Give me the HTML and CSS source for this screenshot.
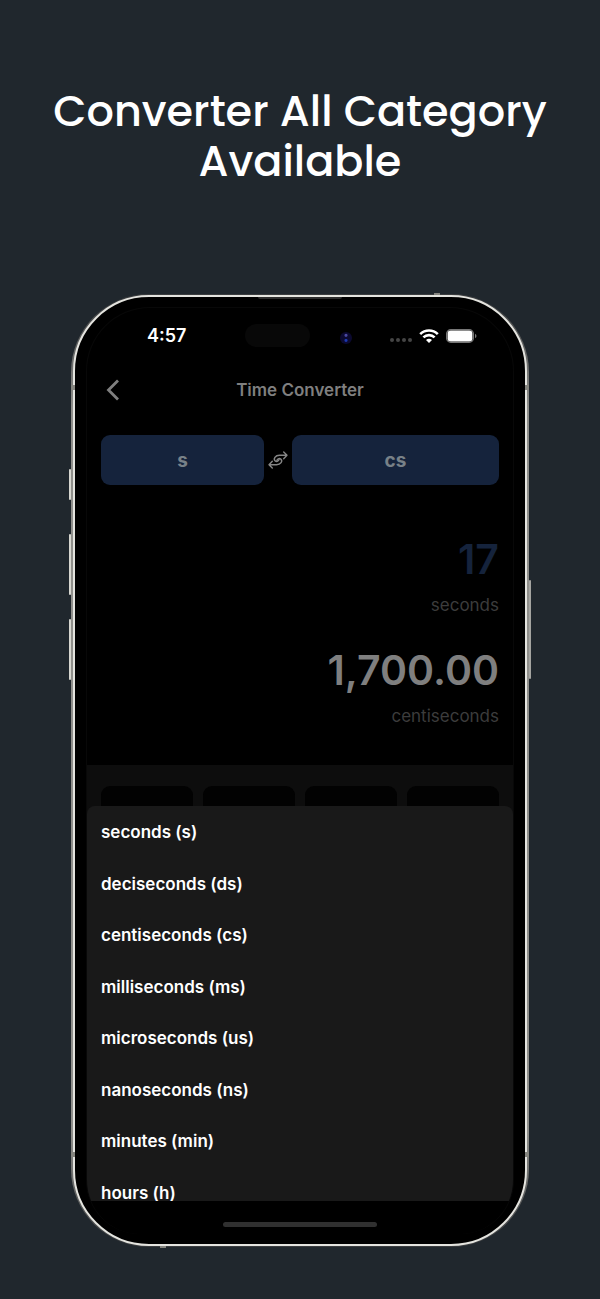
FILE: index.html
```html
<!DOCTYPE html>
<html lang="en">

<head>
    <meta charset="UTF-8">
    <meta name="viewport" content="width=device-width, initial-scale=1.0">
    <title>Time Converter</title>
    <link rel="stylesheet" href="styles.css">
</head>

<body>
    <h1>Converter All Category Available</h1>
    <div class="phone">
        <span class="side-button action"></span>
        <span class="side-button volume-up"></span>
        <span class="side-button volume-down"></span>
        <span class="side-button power"></span>
        <span class="antenna antenna-top"></span>
        <span class="antenna antenna-bottom"></span>
        <span class="antenna antenna-left"></span>
        <span class="antenna antenna-right"></span>
        <span class="antenna antenna-left low"></span>
        <span class="antenna antenna-right low"></span>
        <div class="bezel">
            <span class="speaker"></span>
            <div class="screen">
                <div class="status-bar">
                    <span class="clock">4:57</span>
                    <span class="island"></span>
                    <span class="camera"></span>
                    <div class="status-icons">
                        <svg width="22" height="14" viewBox="0 0 22 14" fill="#454545">
                            <circle cx="2" cy="11" r="2" />
                            <circle cx="8" cy="11" r="2" />
                            <circle cx="14" cy="11" r="2" />
                            <circle cx="20" cy="11" r="2" />
                        </svg>
                        <svg width="20" height="14" viewBox="0 0 20 14" fill="none" stroke="#fff" stroke-width="2.6">
                            <path d="M1.2 5.2C6.1 .3 13.9 .3 18.8 5.2" />
                            <path d="M4.4 8.4C7.5 5.3 12.5 5.3 15.6 8.4" />
                            <path d="M10 14L7 11C8.7 9.4 11.3 9.4 13 11Z" fill="#fff" stroke="none" />
                        </svg>
                        <svg width="31" height="14" viewBox="0 0 31 14">
                            <rect x=".6" y=".6" width="26.8" height="12.8" rx="4.2" fill="none" stroke="#777" stroke-width="1.2" />
                            <rect x="1.6" y="1.6" width="24.8" height="10.8" rx="3.2" fill="#fff" />
                            <path d="M29 4.8C31 5.6 31 8.4 29 9.2Z" fill="#777" />
                        </svg>
                    </div>
                </div>
                <div class="app">
                    <div class="nav">
                        <button class="back" aria-label="Back">
                            <svg width="14" height="22" viewBox="0 0 14 22" fill="none" stroke="#7f7f7f" stroke-width="2.8">
                                <path d="M12 1.5L2.5 11L12 20.5" />
                            </svg>
                        </button>
                        <h2>Time Converter</h2>
                    </div>
                    <div class="units">
                        <button class="unit from">s</button>
                        <button class="swap" aria-label="Swap units">
                            <svg width="20" height="18" viewBox="0 0 20 18" fill="none" stroke="#858585" stroke-width="1.4" stroke-linecap="round" stroke-linejoin="round">
                                <path d="M15.7 1L19 4.3L15.7 7.8M19 4.3H11.5C7.2 4.3 5 8 7.2 9.9C8.8 11.2 11 9.8 11.2 8" />
                                <path d="M4.3 10.2L1 13.7L4.3 17M1 13.7H8.5C12.8 13.7 15 10 12.8 8.1C11.2 6.8 9 8.2 8.8 10" />
                            </svg>
                        </button>
                        <button class="unit to">cs</button>
                    </div>
                    <div class="readings">
                        <p class="value input-value">17</p>
                        <p class="label">seconds</p>
                        <p class="value">1,700.00</p>
                        <p class="label">centiseconds</p>
                    </div>
                    <div class="keypad">
                        <span class="key"></span>
                        <span class="key"></span>
                        <span class="key"></span>
                        <span class="key"></span>
                    </div>
                    <div class="sheet">
                        <ul>
                            <li><button>seconds (s)</button></li>
                            <li><button>deciseconds (ds)</button></li>
                            <li><button>centiseconds (cs)</button></li>
                            <li><button>milliseconds (ms)</button></li>
                            <li><button>microseconds (us)</button></li>
                            <li><button>nanoseconds (ns)</button></li>
                            <li><button>minutes (min)</button></li>
                            <li><button>hours (h)</button></li>
                        </ul>
                    </div>
                </div>
                <div class="home">
                    <span class="home-bar"></span>
                </div>
            </div>
        </div>
    </div>
</body>

</html>
```

FILE: styles.css
```css
* {
    box-sizing: border-box;
}

body {
    margin: 0;
    padding: 86px 20px 52px;
    background-color: #20272d;
    color: white;
    font-family: Inter, 'Liberation Sans', sans-serif;
    font-size: 17px;
}

h1 {
    max-width: 540px;
    margin: 0 auto 108px;
    font-family: Poppins, Inter, sans-serif;
    font-size: 43px;
    font-weight: 500;
    line-height: 50px;
    text-align: center;
}

button {
    padding: 0;
    border: none;
    background: none;
    color: inherit;
    font: inherit;
    cursor: pointer;
}

svg {
    display: block;
}

/* phone frame */
.phone {
    position: relative;
    max-width: 458px;
    margin: 0 auto;
    padding: 1px 2px;
    border-radius: 78px;
    background: linear-gradient(#3a3c3e, #8f8f8b 12%, #8f8f8b 88%, #3a3c3e);
}

.bezel {
    position: relative;
    padding: 10px 11px;
    border: 2px solid #e4e4df;
    border-radius: 76px;
    background-color: #000;
}

.side-button {
    position: absolute;
    left: -2px;
    width: 2px;
    border-radius: 2px;
    background-color: #d6d6cf;
}

.action {
    top: 175px;
    height: 31px;
}

.volume-up {
    top: 240px;
    height: 61px;
}

.volume-down {
    top: 325px;
    height: 61px;
}

.power {
    top: 286px;
    right: -2px;
    left: auto;
    height: 99px;
    background-color: #a5a5a1;
}

.antenna {
    position: absolute;
    z-index: 1;
    width: 4px;
    height: 5px;
    background-color: #85857f;
}

.antenna-top {
    top: -1px;
    right: 89px;
    width: 6px;
    height: 2px;
}

.antenna-bottom {
    bottom: -1px;
    left: 89px;
    width: 6px;
    height: 2px;
}

.antenna-left {
    top: 91px;
    left: 0;
}

.antenna-right {
    top: 91px;
    right: 0;
}

.low {
    top: 858px;
}

.speaker {
    position: absolute;
    top: 0;
    right: 0;
    left: 0;
    width: 84px;
    height: 2px;
    margin: 0 auto;
    border-radius: 0 0 2px 2px;
    background-color: #2c2c2c;
}

.screen {
    overflow: hidden;
    border: 1px solid #080808;
    border-bottom: none;
    border-radius: 64px 64px 54px 54px;
}

/* status bar */
.status-bar {
    display: flex;
    align-items: center;
    height: 55px;
    padding: 0 36px 0 60px;
}

.clock {
    font-size: 18px;
    font-weight: 600;
}

.island {
    width: 65px;
    height: 23px;
    margin-left: auto;
    border-radius: 12px;
    background-color: #080808;
}

.camera {
    width: 12px;
    height: 12px;
    margin: 4px 38px 0 30px;
    border-radius: 50%;
    background: radial-gradient(circle at 50% 28%, #4a48a0 1px, transparent 2px), radial-gradient(circle at 50% 70%, #1c38b0 1px, transparent 2px), #0b0930;
}

.status-icons {
    display: flex;
    gap: 7px;
}

/* converter */
.app {
    position: relative;
    overflow: hidden;
}

.nav {
    display: grid;
    grid-template-columns: 24px 1fr 24px;
    align-items: center;
    height: 52px;
    padding: 2px 19px 0;
}

.nav h2 {
    margin: 0;
    color: #7f7f7f;
    font-size: 17px;
    font-weight: 600;
    text-align: center;
}

.units {
    display: flex;
    align-items: center;
    padding: 20px 14px 0;
}

.unit {
    height: 50px;
    border-radius: 9px;
    background-color: #15233c;
    color: #788188;
    font-size: 19px;
    font-weight: 700;
}

.from {
    flex: 163;
}

.to {
    flex: 207;
}

.swap {
    padding: 0 4px;
}

.readings {
    padding: 50px 14px 37px;
    text-align: right;
}

.readings p {
    margin: 0;
}

.readings .value {
    color: #7f7f7f;
    font-size: 41px;
    font-weight: 600;
    line-height: 48px;
}

.readings .input-value {
    color: #15233c;
}

.readings .label {
    margin-top: 10px;
    color: #3c3c3c;
    font-weight: 400;
    line-height: 24px;
}

.label + .value {
    padding-top: 29px;
}

.keypad {
    display: grid;
    grid-template-columns: repeat(4, 1fr);
    gap: 10px;
    height: 436px;
    padding: 21px 14px;
    background-color: #0d0d0d;
}

.key {
    height: 60px;
    border-radius: 9px;
    background-color: #020202;
}

/* unit list over the keypad */
.sheet {
    position: absolute;
    right: 0;
    bottom: 0;
    left: 0;
    height: 395px;
    overflow: hidden;
    border-radius: 8px 8px 0 0;
    background-color: #191919;
}

.sheet ul {
    display: flex;
    flex-direction: column;
    justify-content: space-between;
    height: 400px;
    margin: 0;
    padding: 13px 14px 0;
    list-style: none;
}

.sheet button {
    display: block;
    width: 100%;
    font-weight: 600;
    line-height: 26px;
    text-align: left;
}

.home {
    display: flex;
    justify-content: center;
    height: 33px;
    padding-top: 21px;
}

.home-bar {
    width: 154px;
    height: 5px;
    border-radius: 3px;
    background-color: #303030;
}
```
